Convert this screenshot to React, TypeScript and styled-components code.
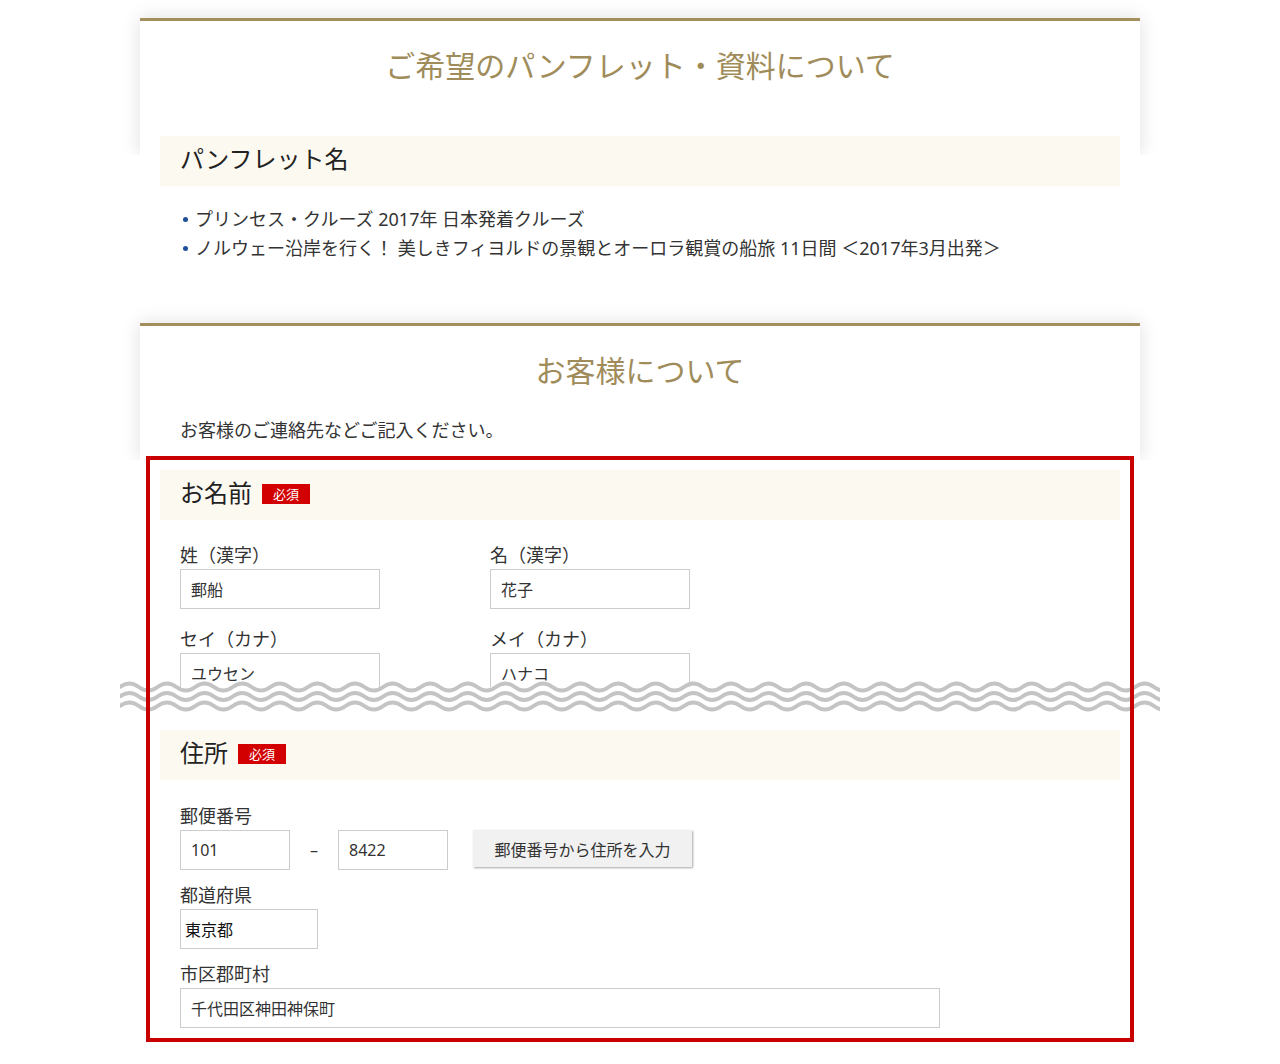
import React from 'react';
import styled, { createGlobalStyle } from 'styled-components';

const GlobalStyle = createGlobalStyle`
  html, body { margin: 0; padding: 0; background: #fff; }
  body {
    font-family: "Noto Sans", "Noto Sans CJK JP", sans-serif;
    color: #333;
  }
  * { box-sizing: border-box; }
`;

const Page = styled.main`
  width: 1000px;
  margin: 0 auto;
  padding: 18px 0 0;
  display: flex;
  flex-direction: column;
`;

const Card = styled.section<{ $top?: number }>`
  position: relative;
  margin-top: ${(p) => p.$top ?? 0}px;
  border-top: 3px solid #a38f5e;
  &::before {
    content: '';
    position: absolute;
    left: 0;
    right: 0;
    top: -3px;
    height: 137px;
    box-shadow: 0 0 18px rgba(0, 0, 0, 0.13);
    clip-path: inset(-40px -40px 0 -40px);
    pointer-events: none;
  }
`;

const CardTitle = styled.h2`
  margin: 0;
  padding-top: 22px;
  font-size: 30px;
  line-height: 45px;
  font-weight: normal;
  color: #a08c5a;
  text-align: center;
`;

const CardBody = styled.div<{ $top: number }>`
  margin-top: ${(p) => p.$top}px;
  padding: 0 20px;
`;

const Bar = styled.h3`
  margin: 0;
  height: 50px;
  display: flex;
  align-items: center;
  padding: 0 20px 8px;
  background: #fcf9f1;
  font-size: 24px;
  font-weight: normal;
  color: #222;
`;

const Required = styled.span`
  display: inline-flex;
  align-items: center;
  justify-content: center;
  width: 48px;
  height: 20px;
  margin: 6px 0 0 10px;
  background: #d20000;
  color: #fff;
  font-size: 13px;
  line-height: 1;
`;

const List = styled.ul`
  list-style: none;
  margin: 19px 0 0;
  padding: 0 0 0 35px;
  font-size: 18px;
  line-height: 29px;
  color: #333;
`;

const Item = styled.li`
  position: relative;
  &::before {
    content: '';
    position: absolute;
    left: -12px;
    top: 12px;
    width: 5px;
    height: 5px;
    border-radius: 50%;
    background: #1d4f9b;
  }
`;

const Desc = styled.p`
  margin: 24px 0 0;
  padding: 0 40px;
  font-size: 18px;
  line-height: 27px;
  color: #333;
`;

const FormArea = styled.div`
  position: relative;
  margin-top: 12px;
  padding: 14px 20px 14px;
  &::after {
    content: '';
    position: absolute;
    top: 0;
    bottom: 0;
    left: 6px;
    right: 6px;
    border: 4px solid #c80000;
    pointer-events: none;
  }
`;

const CutBlock = styled.div`
  height: 217px;
  overflow: hidden;
`;

const NameGrid = styled.div`
  margin-top: 23px;
  padding: 0 20px;
  display: grid;
  grid-template-columns: 310px 200px;
  row-gap: 18px;
`;

const Field = styled.div`
  display: flex;
  flex-direction: column;
  align-items: flex-start;
`;

const Label = styled.label`
  display: block;
  font-size: 18px;
  line-height: 24px;
  margin-bottom: 2px;
  color: #333;
`;

const TextBox = styled.input<{ $w: number; $pad?: number; $dark?: boolean }>`
  width: ${(p) => p.$w}px;
  height: 40px;
  border: 1px solid #ccc;
  padding: 0 ${(p) => p.$pad ?? 10}px;
  font-family: inherit;
  font-size: 16px;
  color: ${(p) => (p.$dark ? '#111' : '#333')};
  background: #fff;
  outline: none;
`;

const WaveSvg = styled.svg`
  display: block;
  width: 1040px;
  height: 32px;
  margin: -6px -40px 0;
`;

const AddressBlock = styled.div`
  margin-top: 17px;
`;

const AddressFields = styled.div`
  margin-top: 24px;
  padding: 0 20px;
  display: flex;
  flex-direction: column;
  gap: 13px;
`;

const PostRow = styled.div`
  display: flex;
  align-items: flex-start;
`;

const Dash = styled.span`
  width: 48px;
  line-height: 40px;
  text-align: center;
  font-size: 16px;
  color: #333;
`;

const LookupButton = styled.button`
  margin-left: 25px;
  width: 219px;
  height: 37px;
  border: 0;
  background: #f1f1f1;
  box-shadow: 1px 1px 2px rgba(0, 0, 0, 0.35);
  font-family: inherit;
  font-size: 16px;
  color: #333;
  padding: 0;
  cursor: pointer;
`;

const wavePath = (y: number, width = 1040, period = 37.6, amp = 3.5) => {
  const half = period / 2;
  let d = `M0 ${y} Q ${half / 2} ${y - 2 * amp} ${half} ${y}`;
  for (let x = half * 2; x <= width + half; x += half) d += ` T ${x.toFixed(2)} ${y}`;
  return d;
};

const Wave = () => (
  <WaveSvg viewBox="0 0 1040 32" preserveAspectRatio="none">
    {[6, 15.5, 25].map((y) => (
      <path key={y} d={wavePath(y)} fill="none" stroke="#c4c4c4" strokeWidth={4} strokeLinecap="round" />
    ))}
  </WaveSvg>
);

export default function App() {
  return (
    <>
      <GlobalStyle />
      <Page>
        <Card>
          <CardTitle>ご希望のパンフレット・資料について</CardTitle>
          <CardBody $top={48}>
            <Bar>パンフレット名</Bar>
            <List>
              <Item>プリンセス・クルーズ 2017年 日本発着クルーズ</Item>
              <Item>ノルウェー沿岸を行く！ 美しきフィヨルドの景観とオーロラ観賞の船旅 11日間 ＜2017年3月出発＞</Item>
            </List>
          </CardBody>
        </Card>

        <Card $top={60}>
          <CardTitle>お客様について</CardTitle>
          <Desc>お客様のご連絡先などご記入ください。</Desc>
          <FormArea>
            <CutBlock>
              <Bar>
                お名前<Required>必須</Required>
              </Bar>
              <NameGrid>
                <Field>
                  <Label>姓（漢字）</Label>
                  <TextBox $w={200} readOnly value="郵船" />
                </Field>
                <Field>
                  <Label>名（漢字）</Label>
                  <TextBox $w={200} readOnly value="花子" />
                </Field>
                <Field>
                  <Label>セイ（カナ）</Label>
                  <TextBox $w={200} readOnly value="ユウセン" />
                </Field>
                <Field>
                  <Label>メイ（カナ）</Label>
                  <TextBox $w={200} readOnly value="ハナコ" />
                </Field>
              </NameGrid>
            </CutBlock>
            <Wave />
            <AddressBlock>
              <Bar>
                住所<Required>必須</Required>
              </Bar>
              <AddressFields>
                <Field>
                  <Label>郵便番号</Label>
                  <PostRow>
                    <TextBox $w={110} readOnly value="101" />
                    <Dash>–</Dash>
                    <TextBox $w={110} readOnly value="8422" />
                    <LookupButton type="button">郵便番号から住所を入力</LookupButton>
                  </PostRow>
                </Field>
                <Field>
                  <Label>都道府県</Label>
                  <TextBox $w={138} $pad={4} $dark readOnly value="東京都" />
                </Field>
                <Field>
                  <Label>市区郡町村</Label>
                  <TextBox $w={760} readOnly value="千代田区神田神保町" />
                </Field>
              </AddressFields>
            </AddressBlock>
          </FormArea>
        </Card>
      </Page>
    </>
  );
}
